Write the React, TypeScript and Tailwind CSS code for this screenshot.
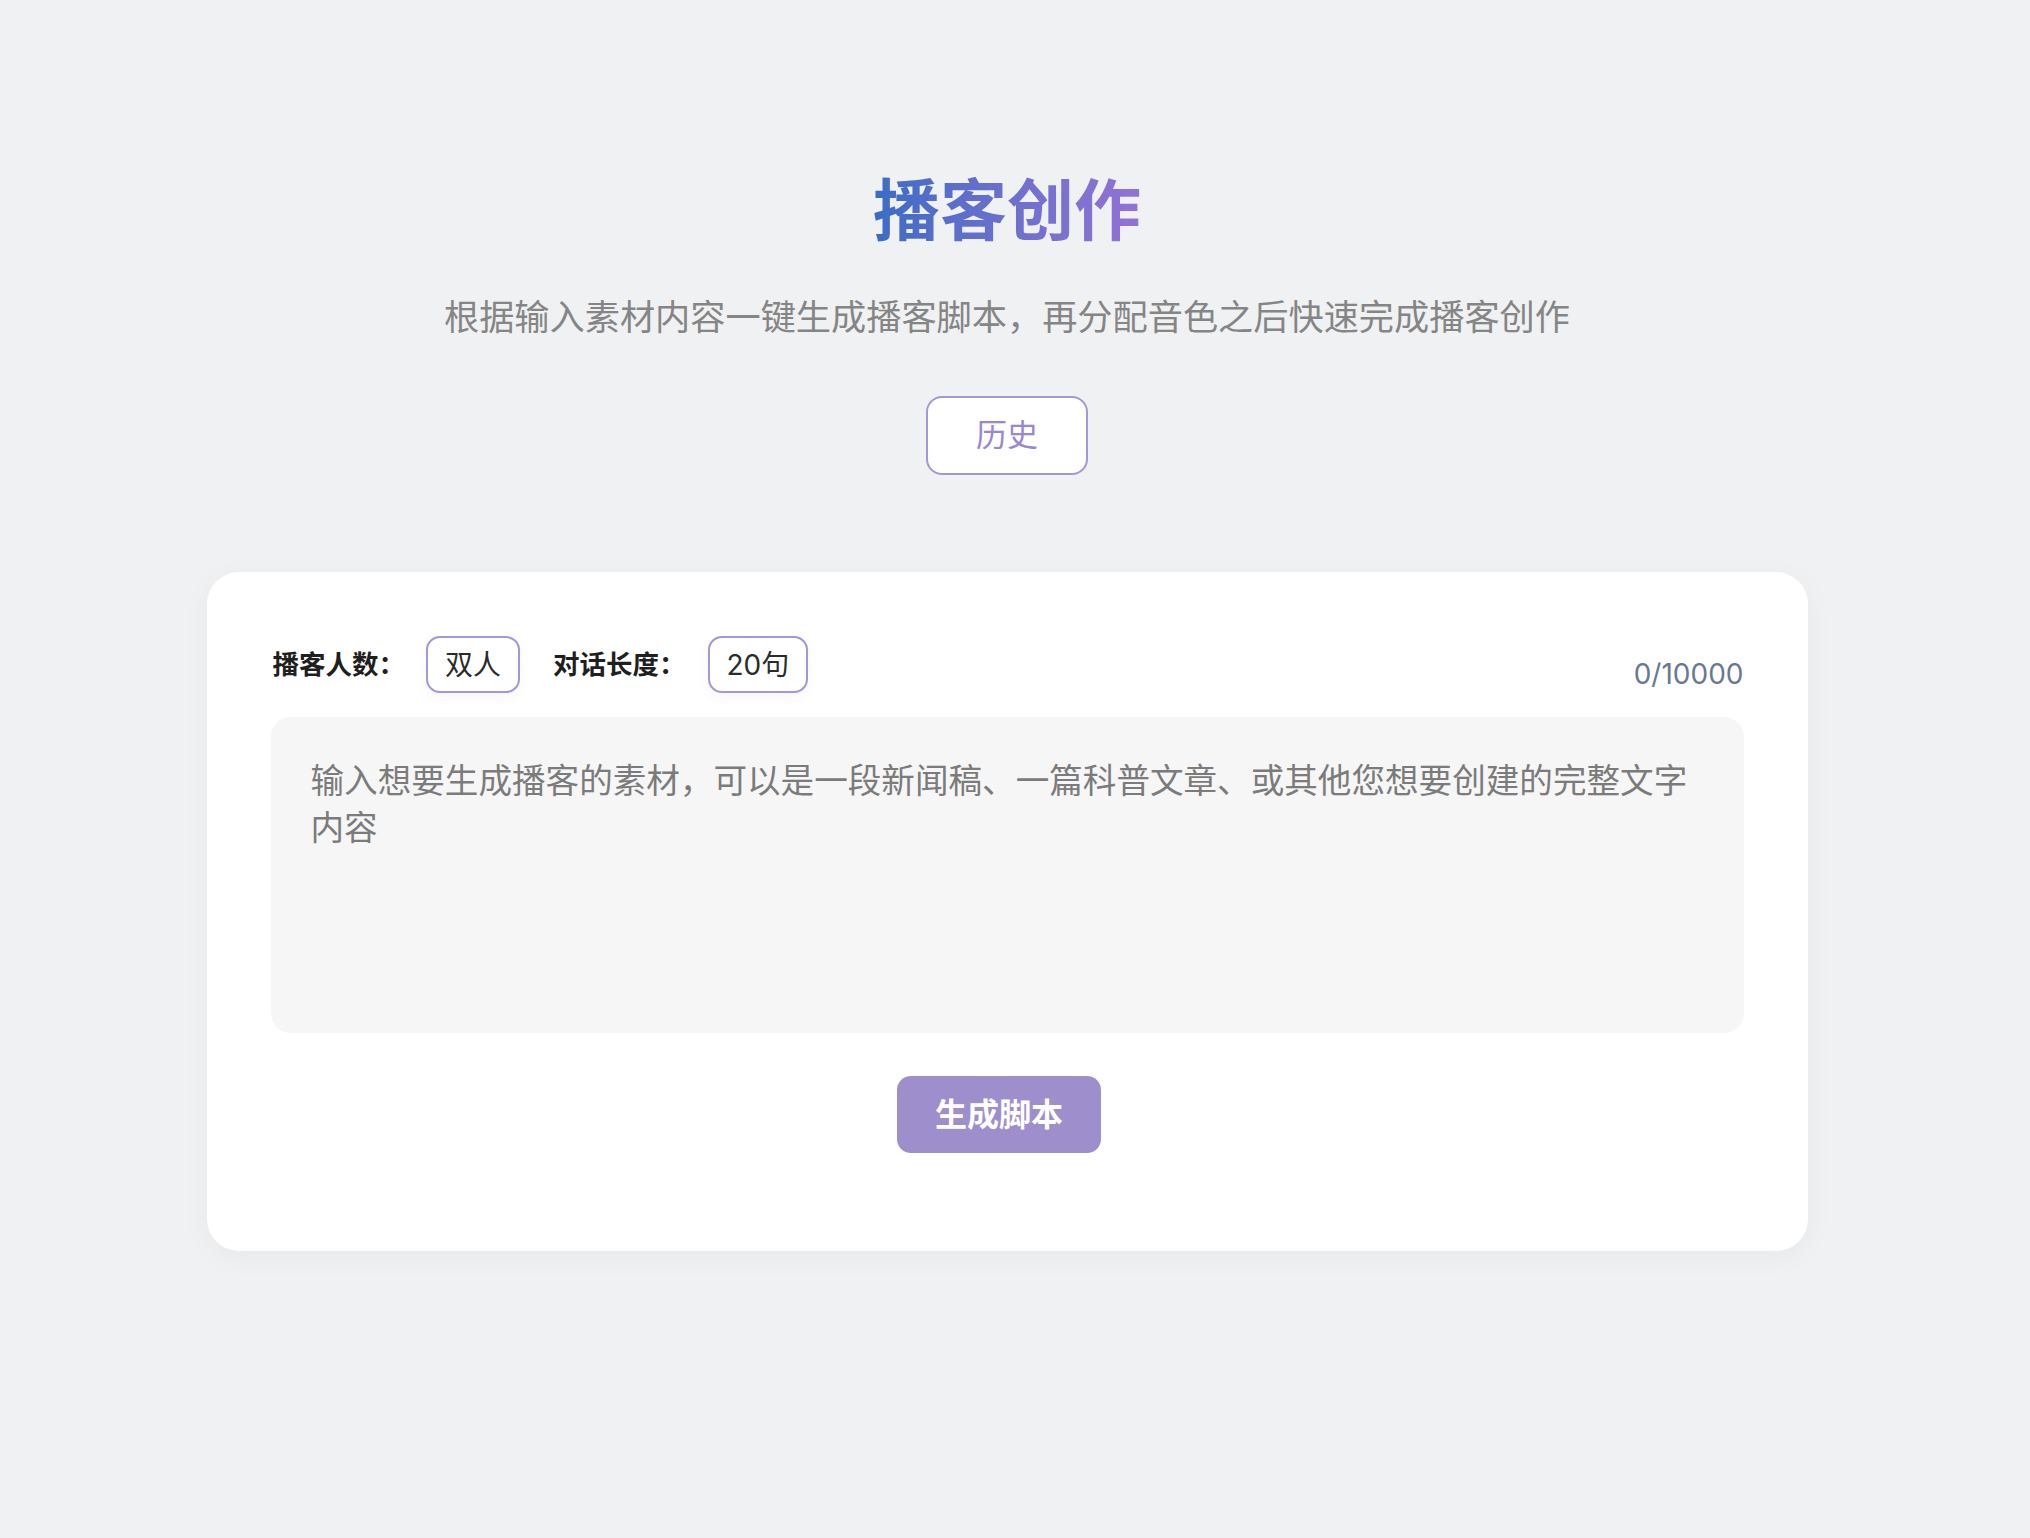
import React from 'react';

const font = 'font-["Inter","Noto_Sans_CJK_SC",sans-serif]';

const Chip: React.FC<{ children: React.ReactNode }> = ({ children }) => (
  <div className="flex h-[57px] items-center rounded-[14px] border-2 border-[#a595d9] bg-white px-[17px] text-[28px] leading-[40px] text-[#2b2b2b] shadow-[0_4px_12px_rgba(120,110,200,0.06)]">
    {children}
  </div>
);

const App: React.FC = () => {
  return (
    <div className={'min-h-screen bg-[#f0f1f3] pt-[161px] pb-[200px] ' + font}>
      <div className="flex flex-col items-center pr-[16px]">
        <h1 className="bg-gradient-to-r from-[#3a6cc5] to-[#9272d6] bg-clip-text text-[67px] font-bold leading-[100px] text-transparent">
          播客创作
        </h1>
        <p className="mt-[28px] text-[35.2px] leading-[56px] text-[#858585]">
          根据输入素材内容一键生成播客脚本，再分配音色之后快速完成播客创作
        </p>
        <button
          type="button"
          className="mt-[51px] flex h-[79px] w-[162px] items-center justify-center rounded-[16px] border-2 border-[#a595d9] bg-white text-[31px] text-[#9a86d4]"
        >
          历史
        </button>

        <div className="mt-[97px] w-[1601px] rounded-[32px] bg-white px-[64px] pt-[64px] pb-[98px] shadow-[0_6px_30px_rgba(0,0,0,0.04)]">
          <div className="flex items-end justify-between">
            <div className="flex items-center">
              <span className="ml-[2px] mr-[21px] text-[26.5px] font-bold text-[#1f1f1f]">播客人数：</span>
              <Chip>双人</Chip>
              <span className="ml-[33px] mr-[22px] text-[26.5px] font-bold text-[#1f1f1f]">对话长度：</span>
              <Chip>20句</Chip>
            </div>
            <span className="text-[28px] leading-[38px] text-[#6b7893]">0/10000</span>
          </div>

          <textarea
            className="mt-[24px] block h-[316px] w-full resize-none rounded-[20px] bg-[#f6f6f7] px-[40px] py-[40px] text-[33.6px] leading-[47px] text-[#333] outline-none placeholder:text-[#7b7b7b]"
            placeholder="输入想要生成播客的素材，可以是一段新闻稿、一篇科普文章、或其他您想要创建的完整文字内容"
          />

          <div className="mt-[43px] flex justify-center pr-[16px]">
            <button
              type="button"
              className="flex h-[77px] w-[204px] items-center justify-center rounded-[14px] bg-[#9e8fcc] text-[32px] font-semibold text-white"
            >
              生成脚本
            </button>
          </div>
        </div>
      </div>
    </div>
  );
};

export default App;
